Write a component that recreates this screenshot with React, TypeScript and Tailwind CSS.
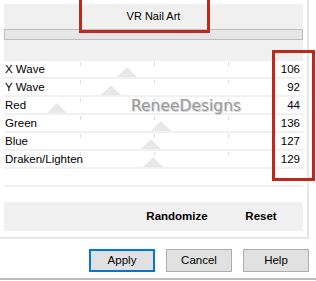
import React from "react";

interface Slider {
  label: string;
  value: number;
}

const sliders: Slider[] = [
  { label: "X Wave", value: 106 },
  { label: "Y Wave", value: 92 },
  { label: "Red", value: 44 },
  { label: "Green", value: 136 },
  { label: "Blue", value: 127 },
  { label: "Draken/Lighten", value: 129 },
];

const ticks = [76, 150, 224];

export default function App() {
  return (
    <div className="relative w-[316px] h-[281px] bg-white overflow-hidden text-black font-['Liberation_Sans',Arial,sans-serif]">
      {/* content frame */}
      <div className="w-[309px] h-[239px] border-r-2 border-b-2 border-[#e6e6e6] pl-1 pt-1">
        <div className="w-[299px]">
          {/* header */}
          <div className="h-[57px] bg-[#f0f0f0] flex flex-col">
            <div className="h-[25px] flex items-center justify-center text-[11px]">
              VR Nail Art
            </div>
            <div className="h-[11px] border border-[#bcbcbc] bg-[#e6e6e6]" />
          </div>

          {/* slider rows */}
          {sliders.map((s) => (
            <SliderRow key={s.label} slider={s} />
          ))}
          <div className="h-[18px] border-b-2 border-[#f0f0f0]" />

          <div className="h-[15px]" />
          <div className="h-[29px] bg-[#f0f0f0] flex justify-end text-[11.5px] font-bold">
            <div className="w-[84px] flex items-center justify-center">Randomize</div>
            <div className="w-[84px] flex items-center justify-center">Reset</div>
          </div>
        </div>
      </div>

      {/* dialog buttons */}
      <div className="flex justify-end gap-[11px] pr-[7px] pt-[10px] text-[11.5px]">
        <button className="w-[66px] h-[23px] bg-[#e1e1e1] border-2 border-[#0078d7]">Apply</button>
        <button className="w-[66px] h-[23px] bg-[#e1e1e1] border border-[#adadad]">Cancel</button>
        <button className="w-[66px] h-[23px] bg-[#e1e1e1] border border-[#adadad]">Help</button>
      </div>
      <div className="mt-[6px] h-[2px] bg-[#bdbdbd]" />

      {/* watermark */}
      <div
        className="absolute left-[131px] top-[95px] text-[15.5px] text-[#9a9a9a] font-['DejaVu_Sans',sans-serif]"
        style={{ textShadow: "1px 1px 0 #d6d6d6, -1px 0 0 #f4f4f4" }}
      >
        ReneeDesigns
      </div>

      {/* red highlight boxes */}
      <div className="absolute left-[79px] top-[-4px] w-[131px] h-[37px] border-[3px] border-[#c0281c]" />
      <div className="absolute left-[272px] top-[50px] w-[43px] h-[131px] border-[3px] border-[#c0281c]" />
    </div>
  );
}

function SliderRow({ slider }: { slider: Slider }) {
  const apex = 3 + 1.13 * slider.value;
  return (
    <div className="relative h-[18px] border-b-2 border-[#f0f0f0] flex items-center justify-between text-[11.5px] leading-[16px]">
      {ticks.map((t) => (
        <div key={t} className="absolute top-[1px] w-px h-[4px] bg-[#dedede]" style={{ left: t }} />
      ))}
      <div
        className="absolute bottom-0 w-0 h-0 border-l-[10px] border-r-[10px] border-b-[10px] border-l-transparent border-r-transparent border-b-[#e8e8e8]"
        style={{ left: apex - 10 }}
      />
      <span className="relative pl-[1px]">{slider.label}</span>
      <span className="relative pr-[3px]">{slider.value}</span>
    </div>
  );
}
